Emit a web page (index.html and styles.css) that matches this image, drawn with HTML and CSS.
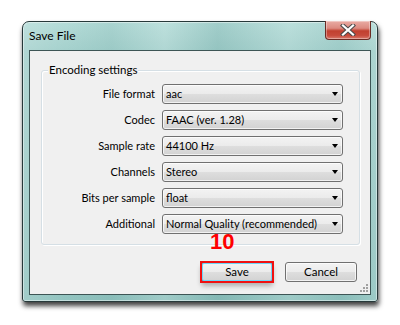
FILE: index.html
```html
<!DOCTYPE html>
<html>
<head>
<meta charset="utf-8">
<link rel="stylesheet" href="styles.css">
</head>
<body>
<div class="window">
  <div class="titlebar">
    <span class="title">Save File</span>
    <div class="close">
      <svg width="18" height="12" viewBox="0 0 18 12"><path d="M4 1.5 L14 10.5 M14 1.5 L4 10.5" stroke="#4a4a4a" stroke-width="4.2" stroke-linecap="square"/><path d="M4 1.5 L14 10.5 M14 1.5 L4 10.5" stroke="#ffffff" stroke-width="2.2" stroke-linecap="square"/></svg>
    </div>
  </div>
  <div class="client">
    <div class="group">
      <div class="group-title">Encoding settings</div>
      <div class="rows">
        <label class="lbl">File format</label><div class="combo">aac<span class="arrow"></span></div>
        <label class="lbl">Codec</label><div class="combo">FAAC (ver. 1.28)<span class="arrow"></span></div>
        <label class="lbl">Sample rate</label><div class="combo">44100 Hz<span class="arrow"></span></div>
        <label class="lbl">Channels</label><div class="combo">Stereo<span class="arrow"></span></div>
        <label class="lbl">Bits per sample</label><div class="combo">float<span class="arrow"></span></div>
        <label class="lbl">Additional</label><div class="combo">Normal Quality (recommended)<span class="arrow"></span></div>
      </div>
    </div>
    <div class="buttons">
      <div class="btn save">Save</div>
      <div class="btn">Cancel</div>
    </div>
    <svg class="grip" width="8" height="8" viewBox="0 0 8 8"><g fill="#a0a0a0"><rect x="6" y="0" width="2" height="2"/><rect x="3" y="3" width="2" height="2"/><rect x="6" y="3" width="2" height="2"/><rect x="0" y="6" width="2" height="2"/><rect x="3" y="6" width="2" height="2"/><rect x="6" y="6" width="2" height="2"/></g></svg>
  </div>
</div>
<div class="step">10</div>
</body>
</html>
```
FILE: styles.css
```css
html, body {
  margin: 0;
  padding: 0;
  background: #ffffff;
}
body {
  position: relative;
  width: 400px;
  height: 325px;
  overflow: hidden;
  font-family: Lato, "Liberation Sans", sans-serif;
  font-size: 11px;
  color: #000;
}
.window {
  box-sizing: border-box;
  margin: 21px 0 0 22px;
  width: 356px;
  height: 281px;
  border: 1px solid #27393a;
  border-radius: 7px 7px 3px 3px;
  background:
    linear-gradient(90deg, rgba(255,255,255,0.15) 0, rgba(255,255,255,0) 12%, rgba(0,80,80,0.06) 25%, rgba(255,255,255,0.12) 40%, rgba(0,80,80,0.10) 55%, rgba(255,255,255,0.10) 75%, rgba(0,80,80,0.05) 90%, rgba(255,255,255,0.1) 100%),
    linear-gradient(#b4dcd8, #a4d0cc 30px, #92c4c0);
  box-shadow: 1px 4px 5px rgba(0,0,0,0.75), inset 0 0 0 1px rgba(255,255,255,0.45);
  display: flex;
  flex-direction: column;
}
.titlebar {
  height: 28px;
  display: flex;
  align-items: flex-start;
  padding-left: 6px;
}
.title {
  flex: 1;
  line-height: 27px;
  font-size: 12px;
  color: #000;
}
.close {
  box-sizing: border-box;
  width: 46px;
  height: 19px;
  margin-right: 6px;
  margin-top: -1px;
  border: 1px solid #6b2b24;
  border-top: none;
  border-radius: 0 0 4px 4px;
  background: linear-gradient(#e9aca4 0, #dc8a80 40%, #c1402f 55%, #c74a3b 80%, #d87a6c 100%);
  box-shadow: inset 0 0 0 1px rgba(255,255,255,0.35);
  display: flex;
  align-items: center;
  justify-content: center;
}
.client {
  position: relative;
  box-sizing: border-box;
  margin: 0 6px 6px 6px;
  height: 245px;
  border: 1px solid #3d5555;
  background: #f0f0f0;
  display: flex;
  flex-direction: column;
}
.group {
  box-sizing: border-box;
  margin: 19px 10px 0 11px;
  height: 175px;
  border: 1px solid #d5dfe5;
  border-radius: 3px;
  box-shadow: inset 1px 1px 0 #ffffff, 1px 1px 0 #ffffff;
}
.group-title {
  margin: -9px 0 0 6px;
  padding: 0 1px;
  width: fit-content;
  height: 16px;
  line-height: 16px;
  background: #f0f0f0;
  font-size: 11.5px;
}
.rows {
  margin-top: 6px;
  display: grid;
  grid-template-columns: 113px 181px;
  column-gap: 7px;
  row-gap: 6px;
}
.lbl {
  text-align: right;
  line-height: 20px;
  white-space: nowrap;
}
.combo {
  position: relative;
  box-sizing: border-box;
  height: 20px;
  border: 1px solid #707070;
  border-radius: 3px;
  background: linear-gradient(#f3f3f3 0, #ebebeb 50%, #dedede 51%, #d2d2d2 100%);
  box-shadow: inset 0 0 0 1px rgba(255,255,255,0.7);
  padding-left: 3px;
  line-height: 18px;
  white-space: nowrap;
}
.arrow {
  position: absolute;
  right: 4px;
  top: 7px;
  width: 0;
  height: 0;
  border-left: 3.5px solid transparent;
  border-right: 3.5px solid transparent;
  border-top: 4px solid #000;
}
.buttons {
  margin-top: 17px;
  margin-right: 13px;
  display: flex;
  justify-content: flex-end;
  gap: 12px;
}
.btn {
  position: relative;
  box-sizing: border-box;
  width: 72px;
  height: 20px;
  border: 1px solid #707070;
  border-radius: 3px;
  background: linear-gradient(#f3f3f3 0, #ebebeb 50%, #dedede 51%, #d2d2d2 100%);
  box-shadow: inset 0 0 0 1px rgba(255,255,255,0.7);
  text-align: center;
  line-height: 18px;
  font-size: 11.5px;
}
.save {
  border-color: #3c7fb1;
  box-shadow: inset 0 0 0 1px #6fd6f7, 0 4px 5px rgba(0,0,0,0.28);
}
.save::after {
  content: "";
  position: absolute;
  left: -2px;
  top: -2px;
  right: -2px;
  bottom: -2px;
  border: 2px solid #f01010;
}
.grip {
  position: absolute;
  right: 2px;
  bottom: 2px;
}
.step {
  position: absolute;
  left: 210px;
  top: 231px;
  font-family: "Liberation Sans", Arial, sans-serif;
  font-weight: bold;
  font-size: 22px;
  line-height: 22px;
  color: #ff0000;
}
```
